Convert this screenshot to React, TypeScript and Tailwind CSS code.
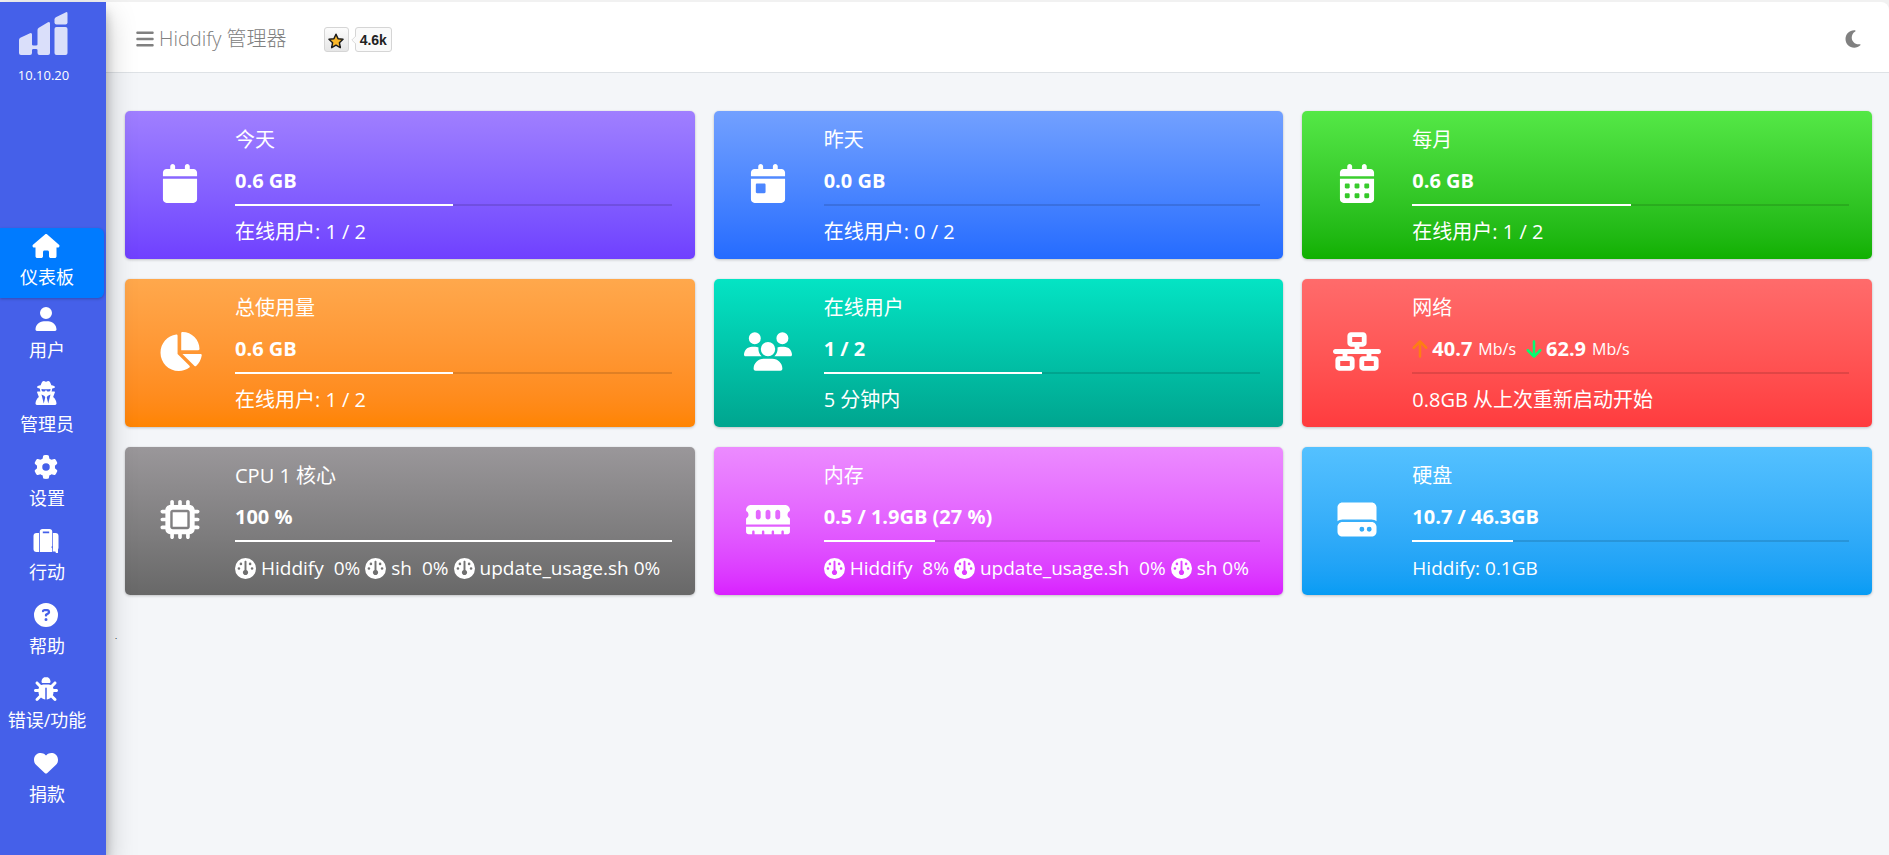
import React from 'react';
import type { IconType } from 'react-icons';
import {
  FaArrowDown,
  FaArrowUp,
  FaBars,
  FaBug,
  FaCalendar,
  FaCalendarDay,
  FaCalendarDays,
  FaChartPie,
  FaCircleQuestion,
  FaGauge,
  FaGear,
  FaHardDrive,
  FaHeart,
  FaHouse,
  FaMemory,
  FaMicrochip,
  FaMoon,
  FaNetworkWired,
  FaUser,
  FaUserSecret,
  FaUsers,
} from 'react-icons/fa6';

interface NavItem {
  label: string;
  icon: IconType | typeof SuitcaseIcon;
  active?: boolean;
}

interface StatCardProps {
  title: string;
  icon: IconType;
  gradient: string;
  value: React.ReactNode;
  progress: number;
  description: React.ReactNode;
}

interface ProcessUsage {
  name: string;
  usage: string;
}

function SuitcaseIcon({ className }: { className?: string }) {
  return (
    <svg viewBox="0 0 25 24" className={className} fill="currentColor" aria-hidden="true">
      <path d="M3 4H5.500V23H3Q0 23 0 20V7Q0 4 3 4Z" />
      <path
        fillRule="evenodd"
        d="M6.300 4V2.500Q6.300 0 9 0H16Q18.700 0 18.700 2.500V17L17.800 18L18.700 19.500V23H6.300ZM9.300 2.600V4.200H15.700V2.600Z"
      />
      <path d="M19.400 4H22Q25 4 25 7V19L24.500 20.500V24H22.500L21.800 22.500H19.400Z" />
    </svg>
  );
}

const navItems: NavItem[] = [
  { label: '仪表板', icon: FaHouse, active: true },
  { label: '用户', icon: FaUser },
  { label: '管理员', icon: FaUserSecret },
  { label: '设置', icon: FaGear },
  { label: '行动', icon: SuitcaseIcon },
  { label: '帮助', icon: FaCircleQuestion },
  { label: '错误/功能', icon: FaBug },
  { label: '捐款', icon: FaHeart },
];

function Logo() {
  return (
    <svg viewBox="0 0 49 43" className="h-[43px] w-[49px]" fill="#dadffa" aria-hidden="true">
      <path d="M0 28Q0 26.500 1.300 25.800L11 21.200Q13 20.400 13 22.500V32.500Q13 33.500 14.500 33.500H17Q18.500 33.500 18.500 32.500V18Q18.500 16.500 19.800 15.700L29 10.200Q31 9.200 31 11.500V41Q31 43 29 43H20.500Q18.500 43 18.500 41V38Q18.500 37 17 37H14.500Q13 37 13 38V41Q13 43 11 43H2Q0 43 0 41Z" />
      <path d="M35.500 7.500Q35.500 6 36.800 5.200L46.500 .4Q48.500 -.5 48.500 1.500V10.500Q48.500 12.500 46.500 12.500H37.500Q35.500 12.500 35.500 10.500Z" />
      <rect x="35.500" y="15" width="13" height="28" rx="2" />
    </svg>
  );
}

function Sidebar() {
  return (
    <aside className="relative z-10 w-[106px] shrink-0 bg-[#4560e9] text-white shadow-[0_14px_28px_rgba(0,0,0,0.25),0_10px_10px_rgba(0,0,0,0.22)]">
      <a href="#home" className="flex h-[226px] w-[87px] flex-col items-center pt-2.5">
        <Logo />
        <span className="mt-2 text-[13px] leading-6 font-medium">10.10.20</span>
      </a>
      <nav className="flex flex-col gap-1">
        {navItems.map(({ label, icon: Icon, active }) => (
          <a
            key={label}
            href={`#${label}`}
            className={
              active
                ? 'mr-[2px] flex h-[70px] flex-col items-center rounded-r-md bg-[#007bff] pt-1.5 pr-3 shadow-[0_1px_3px_rgba(0,0,0,0.24)]'
                : 'mr-[2px] flex h-[70px] flex-col items-center pt-[5px] pr-3'
            }
          >
            <Icon className="h-6 w-7" />
            <span className="mt-1.5 pl-0.5 text-lg leading-[27px] whitespace-nowrap">{label}</span>
          </a>
        ))}
      </nav>
    </aside>
  );
}

function StarBadge() {
  return (
    <a href="#stars" className="mt-0.5 ml-[37px] flex items-center font-['Liberation_Sans',Arial,sans-serif]">
      <span className="flex size-[25px] items-center justify-center rounded-[3px] border border-[#d5d5d5] bg-linear-to-b from-[#fcfcfc] to-[#e6e6e6]">
        <svg viewBox="0 0 16 16" className="mt-[3px] size-4" aria-hidden="true">
          <path
            d="M8 1.200l2.100 4.500 4.900.6-3.600 3.400.9 4.900L8 12.200l-4.300 2.400.9-4.900L1 6.300l4.900-.6z"
            fill="#fbb829"
            stroke="#1b1b1b"
            strokeWidth="1.500"
            strokeLinejoin="round"
          />
        </svg>
      </span>
      <svg viewBox="0 0 6 10" className="z-10 -mr-px ml-[2px] h-2.5 w-[5px]" aria-hidden="true">
        <path d="M6 0L1 5L6 10" fill="#fafafa" stroke="#d5d5d5" />
      </svg>
      <span className="flex h-[25px] items-center rounded-[3px] border border-[#d5d5d5] bg-[#fafafa] px-1 text-sm font-bold text-[#222]">
        4.6k
      </span>
    </a>
  );
}

function Header() {
  return (
    <header className="flex h-[71px] items-center rounded-tr-lg border-b border-[#dee2e6] bg-white pt-[3px] pr-[26px] pl-[30px] text-[#808080]">
      <button type="button" className="flex items-center gap-[5px] text-xl font-light">
        <FaBars className="h-5 w-[18px]" />
        <span>Hiddify 管理器</span>
      </button>
      <StarBadge />
      <button type="button" aria-label="Dark mode" className="ml-auto">
        <FaMoon className="size-5" />
      </button>
    </header>
  );
}

function StatCard({ title, icon: Icon, gradient, value, progress, description }: StatCardProps) {
  return (
    <section
      className={`flex h-[148px] rounded-[5px] pr-[23px] text-white shadow-[0_0_1px_rgba(0,0,0,0.13),0_1px_3px_rgba(0,0,0,0.2)] ${gradient}`}
    >
      <div className="flex w-[110px] shrink-0 items-center justify-center pr-px pb-1">
        <Icon className="h-[39px] w-[48px]" />
      </div>
      <div className="flex min-w-0 flex-1 flex-col pt-3.5 text-xl leading-[30px]">
        <h2 className="whitespace-nowrap">{title}</h2>
        <div className="mt-[11px] font-bold whitespace-nowrap">{value}</div>
        <div className="mt-2 h-[2px] bg-black/12">
          <div className="h-full bg-white" style={{ width: `${progress}%` }} />
        </div>
        <div className="mt-[11px] whitespace-nowrap">{description}</div>
      </div>
    </section>
  );
}

function ProcessList({ items }: { items: ProcessUsage[] }) {
  return (
    <ul className="flex gap-[5px] text-[19px] leading-[30px]">
      {items.map((item) => (
        <li key={item.name} className="flex items-center gap-[5px]">
          <FaGauge className="size-[21px]" />
          <span className="whitespace-pre">{item.name}</span>
          <span>{item.usage}</span>
        </li>
      ))}
    </ul>
  );
}

function NetworkSpeed() {
  return (
    <div className="flex items-center">
      <FaArrowUp className="h-5 w-4 text-[#fd7e14]" />
      <span className="ml-1">40.7</span>
      <span className="ml-1.5 text-base leading-[30px] font-normal">Mb/s</span>
      <FaArrowDown className="ml-2.5 h-5 w-4 text-[#01ff70]" />
      <span className="ml-1">62.9</span>
      <span className="ml-1.5 text-base leading-[30px] font-normal">Mb/s</span>
    </div>
  );
}

const cards: StatCardProps[] = [
  {
    title: '今天',
    icon: FaCalendar,
    gradient: 'bg-linear-to-b from-[#a07fff] to-[#703fff]',
    value: '0.6 GB',
    progress: 50,
    description: '在线用户: 1 / 2',
  },
  {
    title: '昨天',
    icon: FaCalendarDay,
    gradient: 'bg-linear-to-b from-[#72a0ff] to-[#246bff]',
    value: '0.0 GB',
    progress: 0,
    description: '在线用户: 0 / 2',
  },
  {
    title: '每月',
    icon: FaCalendarDays,
    gradient: 'bg-linear-to-b from-[#54e846] to-[#10b000]',
    value: '0.6 GB',
    progress: 50,
    description: '在线用户: 1 / 2',
  },
  {
    title: '总使用量',
    icon: FaChartPie,
    gradient: 'bg-linear-to-b from-[#ffa84c] to-[#ff8400]',
    value: '0.6 GB',
    progress: 50,
    description: '在线用户: 1 / 2',
  },
  {
    title: '在线用户',
    icon: FaUsers,
    gradient: 'bg-linear-to-b from-[#04e4c4] to-[#00a58f]',
    value: '1 / 2',
    progress: 50,
    description: '5 分钟内',
  },
  {
    title: '网络',
    icon: FaNetworkWired,
    gradient: 'bg-linear-to-b from-[#ff6b6b] to-[#ff3b3e]',
    value: <NetworkSpeed />,
    progress: 0,
    description: '0.8GB 从上次重新启动开始',
  },
  {
    title: 'CPU 1 核心',
    icon: FaMicrochip,
    gradient: 'bg-linear-to-b from-[#9a979a] via-[#7d7c7d] via-60% to-[#686868]',
    value: '100 %',
    progress: 100,
    description: (
      <ProcessList
        items={[
          { name: 'Hiddify ', usage: '0%' },
          { name: 'sh ', usage: '0%' },
          { name: 'update_usage.sh', usage: '0%' },
        ]}
      />
    ),
  },
  {
    title: '内存',
    icon: FaMemory,
    gradient: 'bg-linear-to-b from-[#ec8bff] to-[#d91fff]',
    value: '0.5 / 1.9GB (27 %)',
    progress: 25.5,
    description: (
      <ProcessList
        items={[
          { name: 'Hiddify ', usage: '8%' },
          { name: 'update_usage.sh ', usage: '0%' },
          { name: 'sh', usage: '0%' },
        ]}
      />
    ),
  },
  {
    title: '硬盘',
    icon: FaHardDrive,
    gradient: 'bg-linear-to-b from-[#54c1ff] to-[#069cf4]',
    value: '10.7 / 46.3GB',
    progress: 23.1,
    description: <p className="text-[19px] leading-[30px]">Hiddify: 0.1GB</p>,
  },
];

export default function App() {
  return (
    <div className="flex min-h-screen bg-[#f1f1f1] pt-[2px] font-['Open_Sans','Noto_Sans_CJK_SC',sans-serif]">
      <Sidebar />
      <div className="flex min-w-0 flex-1 flex-col">
        <Header />
        <main className="flex-1 bg-[#f4f6f9] pt-[38px] pr-[17px] pl-[19px]">
          <div className="grid grid-cols-3 gap-x-[19px] gap-y-5">
            {cards.map((card) => (
              <StatCard key={card.title} {...card} />
            ))}
          </div>
          <p className="mt-[35px] -ml-2.5 text-[8px] leading-3 text-black">.</p>
        </main>
      </div>
    </div>
  );
}
